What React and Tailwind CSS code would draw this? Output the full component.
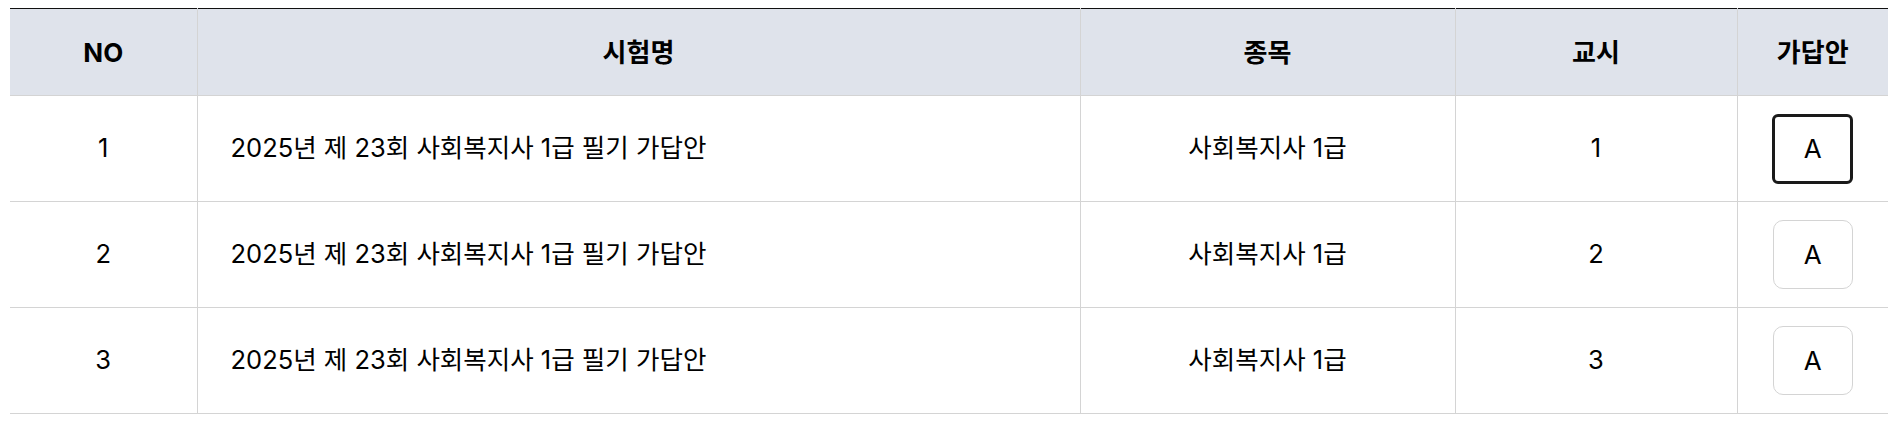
import React from "react";

const rows = [
  { no: 1, name: "2025년 제 23회 사회복지사 1급 필기 가답안", subject: "사회복지사 1급", period: 1, selected: true },
  { no: 2, name: "2025년 제 23회 사회복지사 1급 필기 가답안", subject: "사회복지사 1급", period: 2, selected: false },
  { no: 3, name: "2025년 제 23회 사회복지사 1급 필기 가답안", subject: "사회복지사 1급", period: 3, selected: false },
];

export default function App() {
  return (
    <div
      className="w-[1900px] h-[423px] bg-white pt-[8px] pl-[10px]"
      style={{ fontFamily: '"Inter", "Noto Sans CJK KR", sans-serif' }}
    >
      <table className="w-[1878px] table-fixed border-collapse text-[25.5px] text-black">
        <colgroup>
          <col className="w-[187px]" />
          <col className="w-[883px]" />
          <col className="w-[375px]" />
          <col className="w-[282px]" />
          <col className="w-[151px]" />
        </colgroup>
        <thead>
          <tr className="h-[87px] bg-[#dfe3eb] border-t border-t-[#111111] border-b border-b-[#d4d4d4] text-[26px]">
            <th className="font-bold text-center">NO</th>
            <th className="font-bold text-center border-l border-[#d4d4d4]">시험명</th>
            <th className="font-bold text-center border-l border-[#d4d4d4]">종목</th>
            <th className="font-bold text-center border-l border-[#d4d4d4]">교시</th>
            <th className="font-bold text-center border-l border-[#d4d4d4]">가답안</th>
          </tr>
        </thead>
        <tbody>
          {rows.map((r) => (
            <tr key={r.no} className="h-[106px] border-b border-[#d4d4d4]">
              <td className="text-center">{r.no}</td>
              <td className="text-left pl-[33px] border-l border-[#d4d4d4]">{r.name}</td>
              <td className="text-center border-l border-[#d4d4d4]">{r.subject}</td>
              <td className="text-center border-l border-[#d4d4d4]">{r.period}</td>
              <td className="border-l border-[#d4d4d4]">
                <div className="flex justify-center">
                  <button
                    className={
                      r.selected
                        ? "w-[81px] h-[70px] rounded-[6px] border-[3px] border-[#1a1a1a] bg-white text-[26px] text-black"
                        : "w-[80px] h-[69px] rounded-[10px] border border-[#d4d4d4] bg-white text-[26px] text-black"
                    }
                  >
                    A
                  </button>
                </div>
              </td>
            </tr>
          ))}
        </tbody>
      </table>
    </div>
  );
}
